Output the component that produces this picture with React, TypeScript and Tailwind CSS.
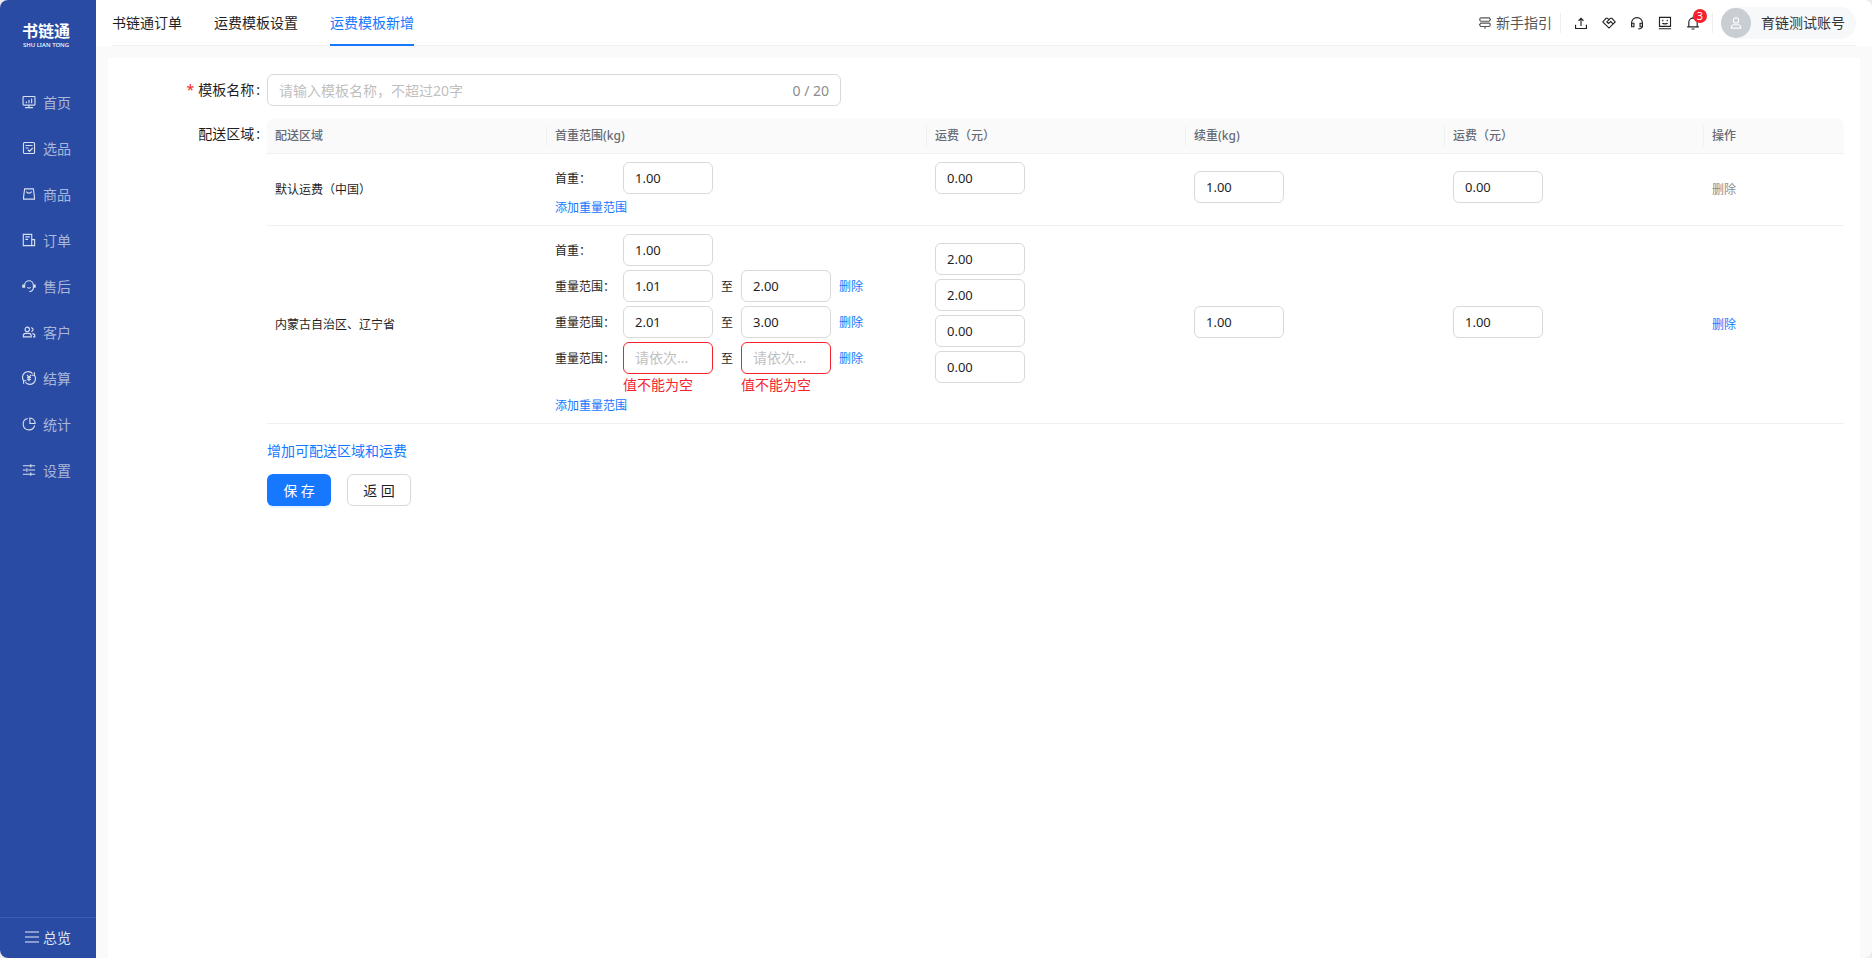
import React from "react";

type IconProps = { children: React.ReactNode; className?: string };

function Icon({ children, className = "size-[14px]" }: IconProps) {
  return (
    <svg
      viewBox="0 0 16 16"
      fill="none"
      stroke="currentColor"
      strokeWidth="1.3"
      className={`shrink-0 ${className}`}
      aria-hidden="true"
    >
      {children}
    </svg>
  );
}

const menu: { label: string; icon: React.ReactNode }[] = [
  {
    label: "首页",
    icon: (
      <>
        <rect x="1.2" y="1.7" width="13.6" height="9.8" rx="0.8" />
        <path d="M5 9.5V7.3M8 9.5V5.6M11 9.5V4M8 11.5v2.600M3.500 14.400h9" />
      </>
    ),
  },
  {
    label: "选品",
    icon: (
      <>
        <rect x="1.7" y="1.7" width="12.6" height="12.6" rx="1.2" />
        <path d="M4 5.200h8M4 8h3.500M6.600 10l2 2L12.200 8" />
      </>
    ),
  },
  {
    label: "商品",
    icon: (
      <>
        <path d="M3 2.200h10l1.200 9v2.600H1.800v-2.600z" />
        <path d="M5 5.200c.8 2.400 5.200 2.400 6 0" />
      </>
    ),
  },
  {
    label: "订单",
    icon: (
      <>
        <path d="M1.500 1.500h9.600v12.900H1.500zM11.100 7.500h3.300v6.900h-3.300" />
        <path d="M3.800 4.500h5M3.800 7.300h3.200" />
      </>
    ),
  },
  {
    label: "售后",
    icon: (
      <>
        <path d="M3 10V7a5 5 0 0 1 10 0v3c0 2.400-1.600 4-4.600 4.400" />
        <path d="M1.300 6.300v3.600M14.700 6.300v3.600" strokeWidth="2" />
        <path d="M6 9.600c1 1 3 1 4 0" />
      </>
    ),
  },
  {
    label: "客户",
    icon: (
      <>
        <circle cx="6" cy="5" r="2.5" />
        <path d="M1.500 13.500v-1.300c0-1.600 1.200-2.700 2.700-2.700h3.600c1.500 0 2.700 1.100 2.700 2.700v1.300z" />
        <path d="M10.300 3.200a2.100 2.100 0 1 1 .3 4.200M11.800 9.800c1.700 0 2.800 1 2.800 2.500v1.200h-2" />
      </>
    ),
  },
  {
    label: "结算",
    icon: (
      <>
        <path d="M2.200 11.500A6.500 6.500 0 0 1 12 2.900M13.800 4.500A6.500 6.500 0 0 1 4 13.100" />
        <path d="M14.200 1.500v3.300h-3.200M1.800 14.500v-3.300H5" />
        <path d="M5.700 4.500 8 7.300l2.300-2.800M8 7.300v4.400M5.800 7.600h4.400M5.800 9.700h4.400" />
      </>
    ),
  },
  {
    label: "统计",
    icon: (
      <>
        <path d="M6.500 1.700a6.600 6.600 0 1 0 7.900 7.900" />
        <path d="M9 1.200V7.400h6A6.400 6.400 0 0 0 9 1.200z" />
      </>
    ),
  },
  {
    label: "设置",
    icon: (
      <>
        <path d="M1 3.200h14M1 8h3.500M7 8h8M1 12.800h14" />
        <path d="M10 1.300v3.800M5.600 6.100v3.800M10 10.900v3.800" />
      </>
    ),
  },
];

function Sidebar() {
  return (
    <aside className="flex w-24 shrink-0 flex-col bg-[#294ba3]">
      <div className="flex h-[79px] flex-col items-center pr-1 pt-5 text-white">
        <span className="text-[16px] font-bold leading-[22px]">书链通</span>
        <span className="text-[6px] font-medium leading-[6px]">SHU LIAN TONG</span>
      </div>
      <nav className="flex flex-col">
        {menu.map((item) => (
          <a
            key={item.label}
            href="#"
            className="flex h-[46px] items-center gap-[7px] pl-[22px] text-[14px] text-[#a9b7da]"
          >
            <Icon className="size-[14px] text-[#d8dff0]">{item.icon}</Icon>
            {item.label}
          </a>
        ))}
      </nav>
      <button
        type="button"
        className="mt-auto flex h-[41px] items-center gap-1 border-t border-[#3f5dac] pb-[2px] pl-[25px] text-[14px] text-[#dfe4f1]"
      >
        <svg viewBox="0 0 14 14" className="size-[14px] text-[#a9b7da]" stroke="currentColor" strokeWidth="1.3" aria-hidden="true">
          <path d="M0 2h14M0 7h14M0 12h14" />
        </svg>
        总览
      </button>
    </aside>
  );
}

function Header() {
  return (
    <header className="bg-white px-4">
      <div className="flex h-[46px] items-center border-b border-[#f0f0f0]">
        <nav className="flex gap-8 self-stretch text-[14px] text-[#1f1f1f]">
          <a href="#" className="flex h-[46px] items-center border-b-2 border-transparent">书链通订单</a>
          <a href="#" className="flex h-[46px] items-center border-b-2 border-transparent">运费模板设置</a>
          <a
            href="#"
            aria-current="page"
            className="flex h-[46px] items-center border-b-2 border-[#1677ff] text-[#1677ff]"
          >
            运费模板新增
          </a>
        </nav>
        <div className="ml-auto flex items-center text-[#222]">
          <a href="#" className="flex items-center gap-1 text-[14px] text-[#555]">
            <Icon>
              <path d="M3.500 2.200h9.300l1.500 1.900-1.500 1.900H3.500c-2 0-2-3.800 0-3.800zM12.500 8.200H3.200L1.700 10.100 3.200 12h9.300c2 0 2-3.800 0-3.800zM8 12v2.600" />
            </Icon>
            新手指引
          </a>
          <span className="ml-2 h-5 w-px bg-[#eee]" />
          <div className="ml-[13px] flex items-center gap-[14px]">
            <button type="button" aria-label="上传">
              <Icon>
                <path d="M1.800 10v4.300h12.400V10M8 11.300V3M5.200 5.400 8 2.600l2.800 2.800" />
              </Icon>
            </button>
            <button type="button" aria-label="合作">
              <Icon>
                <path d="M8 4.200 6.300 2.600H4.600L.9 6.800 8 13.800l7.100-7-3.700-4.200H9.700L5.500 6.800l1.900 1.800 2.600-2.300 3 2.900" />
              </Icon>
            </button>
            <button type="button" aria-label="客服">
              <Icon>
                <path d="M1.800 11V8a6.200 6.200 0 0 1 12.400 0v3c0 2.600-2 3.700-4.700 3.700" />
                <path d="M1.800 8.300h2.700v4H1.800zM11.500 8.300h2.700v4h-2.700z" />
              </Icon>
            </button>
            <button type="button" aria-label="反馈">
              <Icon>
                <path d="M1.700 1.500h12.600v10.300H1.700zM1 14.600h14" />
                <path d="M5.500 4.200v1.800M10.500 4.200v1.800M5 8.300c1 1 5 1 6 0" />
              </Icon>
            </button>
            <button type="button" aria-label="消息" className="relative">
              <Icon>
                <path d="M3.200 12.400V7.200a4.800 4.800 0 0 1 9.600 0v5.200M1.300 12.500h13.400M6.300 14.800h3.400M8 2.400V.8" />
              </Icon>
              <span className="absolute -top-[7px] left-[7px] flex size-[14px] items-center justify-center rounded-full bg-[#f5222d] text-[11px] leading-none text-white">
                3
              </span>
            </button>
          </div>
          <span className="ml-3 h-5 w-px bg-[#eee]" />
          <button
            type="button"
            className="ml-2 flex h-8 items-center gap-[10px] rounded-full bg-[#f7f8fa] pr-[11px] text-[14px] text-[#333]"
          >
            <span className="flex size-[30px] items-center justify-center rounded-full bg-[#c9cdd4] text-white">
              <Icon>
                <circle cx="8" cy="5" r="3" />
                <path d="M2.500 13.800c0-2.500 1.600-3.800 3.500-3.800h4c1.900 0 3.500 1.300 3.500 3.800z" />
              </Icon>
            </span>
            育链测试账号
          </button>
        </div>
      </div>
    </header>
  );
}

function NumberInput({ label, value, invalid = false }: { label: string; value?: string; invalid?: boolean }) {
  return (
    <input
      aria-label={label}
      aria-invalid={invalid}
      defaultValue={value}
      placeholder="请依次..."
      className={`block h-8 w-[90px] rounded-md border bg-white px-[11px] text-[13px] text-[#1f1f1f] outline-none placeholder:text-[14px] placeholder:text-[#bfbfbf] ${
        invalid ? "border-[#f5222d]" : "border-[#d9d9d9]"
      }`}
    />
  );
}

type Range = { from?: string; to?: string };

function Field({ label, value }: { label: string; value?: string }) {
  const invalid = value === undefined;
  return (
    <div>
      <NumberInput label={label} value={value} invalid={invalid} />
      {invalid && <p className="text-[14px] leading-[22px] text-[#f5222d]">值不能为空</p>}
    </div>
  );
}

function WeightCell({ first, ranges }: { first: string; ranges: Range[] }) {
  const last = ranges[ranges.length - 1];
  const endsWithError = last !== undefined && last.from === undefined;
  return (
    <div>
      <div className={`flex flex-col gap-1 leading-[34px] ${endsWithError ? "" : "pb-1"}`}>
        <div className="flex h-8">
          <span className="w-[68px]">首重：</span>
          <NumberInput label="首重" value={first} />
        </div>
        {ranges.map((range, i) => (
          <div key={i} className="flex items-start">
            <span className="h-8 w-[68px]">重量范围：</span>
            <Field label="重量范围起" value={range.from} />
            <span className="h-8 w-7 text-center">至</span>
            <Field label="重量范围止" value={range.to} />
            <button type="button" className="ml-2 h-8 text-[#1677ff]">
              删除
            </button>
          </div>
        ))}
      </div>
      <button type="button" className="block leading-[19px] text-[#1677ff]">
        添加重量范围
      </button>
    </div>
  );
}

const rows = [
  {
    area: "默认运费（中国）",
    first: "1.00",
    ranges: [] as Range[],
    fees: ["0.00"],
    extra: "1.00",
    extraFee: "0.00",
    removable: false,
  },
  {
    area: "内蒙古自治区、辽宁省",
    first: "1.00",
    ranges: [{ from: "1.01", to: "2.00" }, { from: "2.01", to: "3.00" }, {}] as Range[],
    fees: ["2.00", "2.00", "0.00", "0.00"],
    extra: "1.00",
    extraFee: "1.00",
    removable: true,
  },
];

const columns = [
  { title: "配送区域", width: "w-[280px]" },
  { title: "首重范围(kg)", width: "w-[380px]" },
  { title: "运费（元）", width: "w-[259px]" },
  { title: "续重(kg)", width: "w-[259px]" },
  { title: "运费（元）", width: "w-[259px]" },
  { title: "操作", width: "w-auto" },
];

function AreaTable() {
  return (
    <table className="w-full table-fixed border-separate border-spacing-0 text-left text-[12px] text-[#1f1f1f]">
      <thead>
        <tr>
          {columns.map((column, i) => (
            <th
              key={i}
              className={`h-9 border-b border-[#f0f0f0] bg-[#fafafa] p-0 font-medium text-[#666b75] first:rounded-tl-lg last:rounded-tr-lg ${column.width}`}
            >
              <div
                className={`flex h-5 items-center pl-2 ${
                  i < columns.length - 1 ? "border-r border-[#f0f0f0]" : ""
                }`}
              >
                {column.title}
              </div>
            </th>
          ))}
        </tr>
      </thead>
      <tbody>
        {rows.map((row) => (
          <tr key={row.area} className="[&>td]:border-b [&>td]:border-[#f0f0f0] [&>td]:px-2 [&>td]:py-2 [&>td]:align-middle">
            <td>{row.area}</td>
            <td>
              <WeightCell first={row.first} ranges={row.ranges} />
            </td>
            <td>
              <div className="flex flex-col gap-1 pb-[23px]">
                {row.fees.map((fee, i) => (
                  <NumberInput key={i} label="运费" value={fee} />
                ))}
              </div>
            </td>
            <td>
              <div className="pb-[5px]">
                <NumberInput label="续重" value={row.extra} />
              </div>
            </td>
            <td>
              <div className="pb-[5px]">
                <NumberInput label="续重运费" value={row.extraFee} />
              </div>
            </td>
            <td>
              <button
                type="button"
                disabled={!row.removable}
                className={row.removable ? "text-[#1677ff]" : "text-[#8c8c8c]"}
              >
                删除
              </button>
            </td>
          </tr>
        ))}
      </tbody>
    </table>
  );
}

export default function App() {
  return (
    <div className="min-h-screen bg-[#ececec] font-['Noto_Sans','Noto_Sans_CJK_SC',sans-serif]">
      <div className="flex min-h-screen overflow-hidden rounded-lg bg-[#fafafa]">
        <Sidebar />
        <div className="flex min-w-0 flex-1 flex-col">
          <Header />
          <main className="mx-3 mt-3 flex-1 bg-white py-4 pr-4">
            <form className="text-[14px] text-[#1f1f1f]">
              <div className="flex">
                <label htmlFor="template-name" className="w-[159px] shrink-0 pr-[7px] text-right leading-8">
                  <span className="mr-1 text-[#f5222d]">*</span>模板名称<span className="ml-[2px]">:</span>
                </label>
                <div className="flex h-8 w-[574px] items-center rounded-md border border-[#d9d9d9] px-[11px]">
                  <input
                    id="template-name"
                    placeholder="请输入模板名称，不超过20字"
                    className="min-w-0 flex-1 bg-transparent outline-none placeholder:text-[#bfbfbf]"
                  />
                  <span className="text-[#8c8c8c]">0 / 20</span>
                </div>
              </div>
              <div className="mt-3 flex">
                <div className="w-[159px] shrink-0 pr-[7px] text-right leading-8">
                  配送区域<span className="ml-[2px]">:</span>
                </div>
                <div className="min-w-0 flex-1">
                  <AreaTable />
                  <button type="button" className="mt-4 block leading-[22px] text-[#1677ff]">
                    增加可配送区域和运费
                  </button>
                  <div className="mt-3 flex gap-4">
                    <button
                      type="button"
                      className="h-8 w-16 rounded-md bg-[#1677ff] text-white shadow-[0_2px_0_rgba(5,145,255,0.1)]"
                    >
                      保 存
                    </button>
                    <button type="button" className="h-8 w-16 rounded-md border border-[#d9d9d9] bg-white">
                      返 回
                    </button>
                  </div>
                </div>
              </div>
            </form>
          </main>
        </div>
      </div>
    </div>
  );
}
